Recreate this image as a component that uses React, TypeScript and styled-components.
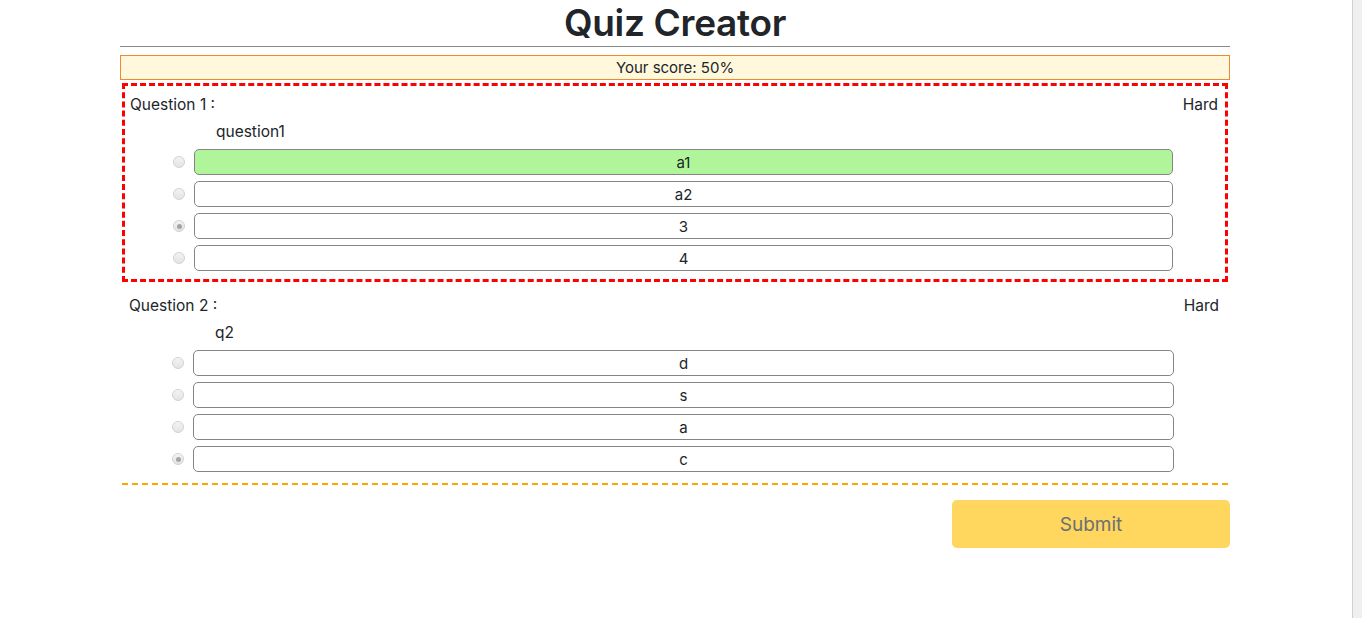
import React from 'react';
import styled, { createGlobalStyle } from 'styled-components';

interface Question {
  id: number;
  text: string;
  level: string;
  answers: string[];
  picked: number;
  correct?: number;
  active?: boolean;
}

const questions: Question[] = [
  { id: 1, text: 'question1', level: 'Hard', answers: ['a1', 'a2', '3', '4'], picked: 2, correct: 0, active: true },
  { id: 2, text: 'q2', level: 'Hard', answers: ['d', 's', 'a', 'c'], picked: 3 },
];

const GlobalStyle = createGlobalStyle`
  html, body {
    margin: 0;
    padding: 0;
    background: #fff;
  }
  body {
    font-family: Inter, "Liberation Sans", Arial, sans-serif;
    font-size: 16px;
    color: #212529;
  }
  * {
    box-sizing: border-box;
  }
`;

const App: React.FC = () => {
  return (
    <>
      <GlobalStyle />
      <Page>
        <Main>
          <Container>
            <Title>Quiz Creator</Title>
            <Rule />
            <Score>Your score: 50%</Score>
            {questions.map((q) => (
              <QuestionBlock key={q.id} $active={!!q.active}>
                <QuestionHeader>
                  <span>Question {q.id} :</span>
                  <span>{q.level}</span>
                </QuestionHeader>
                <QuestionText>{q.text}</QuestionText>
                {q.answers.map((a, i) => (
                  <AnswerRow key={a}>
                    <Radio $checked={q.picked === i} />
                    <AnswerInput $correct={q.correct === i} readOnly value={a} />
                  </AnswerRow>
                ))}
              </QuestionBlock>
            ))}
            <Separator />
            <Footer>
              <SubmitButton disabled>Submit</SubmitButton>
            </Footer>
          </Container>
        </Main>
        <Gutter />
      </Page>
    </>
  );
};

const Page = styled.div`
  display: flex;
  min-height: 100vh;
`;

const Main = styled.main`
  flex: 1;
  padding-right: 2px;
`;

const Gutter = styled.div`
  width: 10px;
  background: #efefef;
  border-left: 1px solid #cfcfcf;
`;

const Container = styled.div`
  width: 1110px;
  margin: 0 auto;
`;

const Title = styled.h1`
  margin: 0;
  text-align: center;
  font-size: 37px;
  font-weight: 600;
  line-height: 46px;
  color: #212529;
  letter-spacing: -0.3px;
`;

const Rule = styled.div`
  height: 1px;
  background: #8a8a8a;
`;

const Score = styled.div`
  margin-top: 8px;
  height: 25px;
  line-height: 23px;
  text-align: center;
  background: #fff8dc;
  border: 1px solid #f0892c;
  font-size: 15px;
`;

const QuestionBlock = styled.section<{ $active: boolean }>`
  margin: 3px 2px 0;
  border: ${(p) => (p.$active ? '3px dashed #ff0000' : '2px solid transparent')};
  padding: 7px 7px 8px 5px;
`;

const QuestionHeader = styled.div`
  display: flex;
  justify-content: space-between;
  line-height: 24px;
  font-size: 15.5px;
`;

const QuestionText = styled.div`
  margin-top: 3px;
  padding-left: 86px;
  line-height: 23px;
  font-size: 15.5px;
`;

const AnswerRow = styled.div`
  display: flex;
  align-items: center;
  gap: 9px;
  padding: 0 45px 0 43px;
  margin-top: 6px;
`;

const Radio = styled.span<{ $checked: boolean }>`
  flex: none;
  width: 12px;
  height: 12px;
  border-radius: 50%;
  border: 1px solid #d2d2d2;
  background: linear-gradient(#f3f3f3, #e4e4e4);
  display: flex;
  align-items: center;
  justify-content: center;

  &::after {
    content: '';
    width: 5px;
    height: 5px;
    border-radius: 50%;
    background: ${(p) => (p.$checked ? '#a4a4a4' : 'transparent')};
  }
`;

const AnswerInput = styled.input<{ $correct: boolean }>`
  flex: 1;
  height: 26px;
  border: 1px solid #858585;
  border-radius: 5px;
  background: ${(p) => (p.$correct ? '#b0f59a' : '#fff')};
  text-align: center;
  font-family: inherit;
  font-size: 15px;
  color: #212529;
  padding: 0 8px;
  outline: none;
`;

const Separator = styled.div`
  margin: 1px 2px 0;
  border-top: 2px dashed #ffa500;
`;

const Footer = styled.div`
  display: flex;
  justify-content: flex-end;
  margin-top: 15px;
`;

const SubmitButton = styled.button`
  width: 278px;
  height: 48px;
  border: none;
  border-radius: 5px;
  background: #ffd65e;
  color: #6c6f74;
  font-family: inherit;
  font-size: 19px;
`;

export default App;
